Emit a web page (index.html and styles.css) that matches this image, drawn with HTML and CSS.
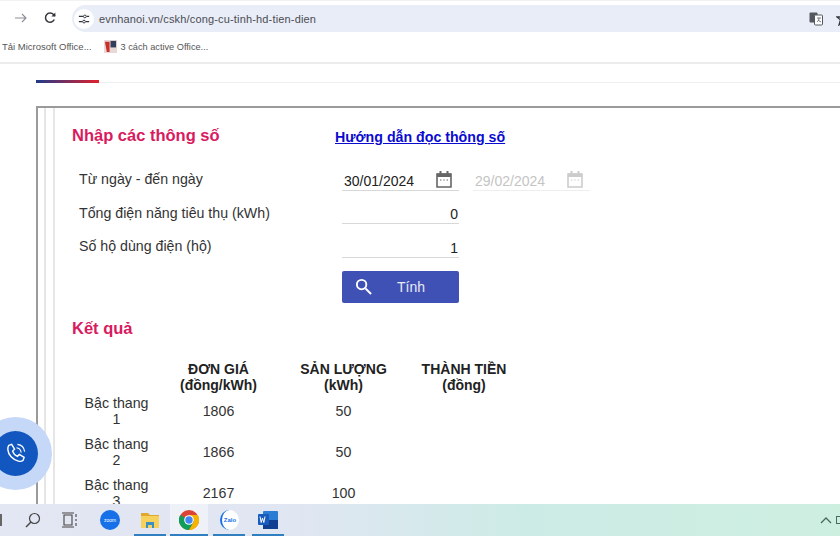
FILE: index.html
```html
<!DOCTYPE html>
<html lang="vi">
<head>
<meta charset="utf-8">
<title>Công cụ tính hóa đơn tiền điện</title>
<link rel="stylesheet" href="styles.css">
</head>
<body>
<div class="screen">
  <header class="toolbar">
    <svg class="nav-icon forward" viewBox="0 0 14 14"><path d="M1 7h11M8 3l4 4-4 4" fill="none" stroke="#8a8d94" stroke-width="1.1"/></svg>
    <svg class="nav-icon reload" viewBox="0 0 14 14"><path d="M11.3 8.5A4.6 4.6 0 1 1 10.5 3.6L12 5" fill="none" stroke="#33363b" stroke-width="1.5"/><path d="M12.4 1.6v4h-4z" fill="#33363b"/></svg>
    <div class="omnibox">
      <span class="site-chip">
        <svg viewBox="0 0 14 14" class="chip-icon"><path d="M1 4h5M9 10h4M1 10h4M10 4h3" stroke="#33363b" stroke-width="1.3" fill="none"/><circle cx="8" cy="4" r="1.6" fill="none" stroke="#33363b" stroke-width="1.1"/><circle cx="7" cy="10" r="1.6" fill="none" stroke="#33363b" stroke-width="1.1"/></svg>
      </span>
      <span class="url">evnhanoi.vn/cskh/cong-cu-tinh-hd-tien-dien</span>
      <svg class="translate" viewBox="0 0 14 14"><rect x="0.5" y="0.5" width="8" height="10" rx="1" fill="#55585e"/><rect x="5.5" y="3" width="8" height="10" rx="1" fill="#fff" stroke="#55585e"/><path d="M8 6h4M10 6c0 2-1 3-2 4M9 8l3 2" stroke="#55585e" fill="none" stroke-width=".8"/></svg>
      <svg class="star" viewBox="0 0 14 14"><path d="M7 1l1.8 4H13l-3.4 2.8L11 13 7 10.2 3 13l1.4-5.2L1 5h4.2z" fill="none" stroke="#33363b" stroke-width="1.3"/></svg>
    </div>
  </header>

  <nav class="bookmarks">
    <span class="bookmark">Tải Microsoft Office...</span>
    <span class="bookmark">
      <svg class="fav" viewBox="0 0 14 14"><rect width="14" height="14" fill="#e9d9d6"/><path d="M1 2h5v11H3z" fill="#c9302c"/><rect x="7" y="1" width="6" height="7" fill="#33405c"/></svg>
      <span class="bookmark-text">3 cách active Office...</span>
    </span>
  </nav>

  <main class="page">
    <div class="heading-tail">
      <div class="underline"></div>
    </div>

    <section class="panel">
      <div class="frame">
        <div class="inner">
          <div class="title-row">
            <h2 class="section-title">Nhập các thông số</h2>
            <a class="guide" href="#">Hướng dẫn đọc thông số</a>
          </div>

          <div class="form">
            <div class="form-labels">
              <div class="label">Từ ngày - đến ngày</div>
              <div class="label">Tổng điện năng tiêu thụ (kWh)</div>
              <div class="label">Số hộ dùng điện (hộ)</div>
            </div>
            <div class="form-fields">
              <div class="date-row">
                <div class="field date">
                  <span>30/01/2024</span>
                  <svg class="cal" viewBox="0 0 16 17"><path d="M1 3h14v13H1z" fill="none" stroke="#666" stroke-width="1.6"/><path d="M1 2.5h14V6H1zM3.5 0h2v3h-2zM10.5 0h2v3h-2z" fill="#666"/><path d="M4 9h1.4M7.3 9h1.4M10.6 9H12" stroke="#666"/></svg>
                </div>
                <div class="field date disabled">
                  <span>29/02/2024</span>
                  <svg class="cal" viewBox="0 0 16 17"><path d="M1 3h14v13H1z" fill="none" stroke="#ccc" stroke-width="1.6"/><path d="M1 2.5h14V6H1zM3.5 0h2v3h-2zM10.5 0h2v3h-2z" fill="#ccc"/><path d="M4 9h1.4M7.3 9h1.4M10.6 9H12" stroke="#ccc"/></svg>
                </div>
              </div>
              <div class="field number">0</div>
              <div class="field number">1</div>
              <button class="calc" type="button">
                <svg class="search" viewBox="0 0 18 18"><circle cx="7" cy="7" r="5" fill="none" stroke="#fff" stroke-width="2"/><path d="M11 11l6 6" stroke="#fff" stroke-width="2.2"/></svg>
                <span>Tính</span>
              </button>
            </div>
          </div>

          <h2 class="section-title result">Kết quả</h2>

          <table class="prices">
            <thead>
              <tr><th class="c-name"></th><th class="c-price">ĐƠN GIÁ<br>(đồng/kWh)</th><th class="c-qty">SẢN LƯỢNG<br>(kWh)</th><th class="c-total">THÀNH TIỀN<br>(đồng)</th></tr>
            </thead>
            <tbody>
              <tr><td>Bậc thang<br>1</td><td>1806</td><td>50</td><td></td></tr>
              <tr><td>Bậc thang<br>2</td><td>1866</td><td>50</td><td></td></tr>
              <tr><td>Bậc thang<br>3</td><td>2167</td><td>100</td><td></td></tr>
            </tbody>
          </table>
        </div>
      </div>
    </section>

    <div class="call-ring"><div class="call-btn">
      <svg viewBox="0 0 24 24" class="call-icon"><path d="M5 3.5l3-1 3 5-2 2c.8 2.5 2.5 4.400 5 5.500l2-2 5 3-1 3c-1 1-3 1.500-5 1-6-1.500-10.500-6.500-11-12-.1-1.800.2-3.500 1-4.500z" fill="none" stroke="#fff" stroke-width="1.500"/><path d="M13 6c2.500.3 4.500 2.300 5 5M14 2.500c4 .5 7 3.500 7.500 7.500" fill="none" stroke="#fff" stroke-width="1.200"/></svg>
    </div></div>
  </main>

  <footer class="taskbar">
    <span class="tb-start"></span>
    <svg class="tb-search" viewBox="0 0 16 16"><circle cx="9.500" cy="6.500" r="5" fill="none" stroke="#444" stroke-width="1.200"/><path d="M6 10l-5 5" stroke="#444" stroke-width="1.400"/></svg>
    <svg class="tb-view" viewBox="0 0 16 16"><path d="M3 3h8v10H3zM1 1h12M1 15h12M15 2v3M15 7v2M15 11v3" fill="none" stroke="#444" stroke-width="1.100"/></svg>
    <span class="tb-app zoom"><span class="zoom-logo">zoom</span></span>
    <span class="tb-app active-line files">
      <svg viewBox="0 0 18 16" class="tb-logo"><path d="M0 1h7l2 2h9v3H0z" fill="#e0a82e"/><rect y="4" width="18" height="12" fill="#f6d15c"/><path d="M5 16v-6h8v6h-2v-3H7v3z" fill="#3a8fc4"/></svg>
    </span>
    <span class="tb-app active-line current">
      <svg viewBox="0 0 20 20" class="tb-logo chrome"><circle cx="10" cy="10" r="10" fill="#db4437"/><path d="M10 10L1.300 5A10 10 0 0 0 10 20l5-8.700z" fill="#0f9d58"/><path d="M10 10l5 1.300L10 20A10 10 0 0 0 18.700 5H10z" fill="#f4b400"/><circle cx="10" cy="10" r="4.800" fill="#fff"/><circle cx="10" cy="10" r="3.700" fill="#4285f4"/></svg>
    </span>
    <span class="tb-app active-line zalo"><span class="zalo-logo">Zalo</span></span>
    <span class="tb-app active-line word">
      <svg viewBox="0 0 20 18" class="tb-logo"><rect x="5" y="0" width="15" height="18" rx="1" fill="#2b7cd3"/><rect x="5" y="9" width="15" height="9" fill="#103f91"/><rect x="0" y="3" width="11" height="11" rx="1" fill="#185abd"/><path d="M2 5.500l1.200 6 1.300-4.500 1.300 4.500 1.200-6" stroke="#fff" fill="none"/></svg>
    </span>
    <span class="tb-spacer"></span>
    <svg class="tb-chevron" viewBox="0 0 12 8"><path d="M1 7l5-5 5 5" fill="none" stroke="#4a6a60" stroke-width="1.300"/></svg>
    <span class="tb-tray"></span>
  </footer>
</div>
</body>
</html>
```

FILE: styles.css
```css
* { box-sizing: border-box; }
html, body { margin: 0; padding: 0; background: #fff; }
body { font-family: "Liberation Sans", Arial, sans-serif; color: #333; }
.screen { width: 840px; height: 560px; overflow: hidden; display: flex; flex-direction: column; position: relative; background: #fff; }

.toolbar { height: 33px; flex: none; padding-top: 4px; display: flex; align-items: flex-start; border-top: 1px solid #f2f2f2; }
.nav-icon { width: 14px; height: 14px; flex: none; margin-top: 6px; }
.forward { margin-left: 14px; }
.reload { margin-left: 15px; }
.omnibox { flex: 1; margin-left: 15px; height: 27px; background: #e9edf7; border-radius: 14px 0 0 14px; display: flex; align-items: center; position: relative; }
.site-chip { width: 20px; height: 20px; margin-left: 2px; background: #fff; border-radius: 50%; display: flex; align-items: center; justify-content: center; }
.chip-icon { width: 12px; height: 12px; }
.url { margin-left: 5px; font-size: 11px; color: #4a4c52; letter-spacing: .16px; flex: 1; }
.translate { width: 14px; height: 14px; margin-right: 13px; }
.star { width: 14px; height: 14px; margin-right: -10px; }

.bookmarks { height: 31px; flex: none; display: flex; align-items: center; font-size: 9.5px; color: #555; padding: 0 0 2px 2px; gap: 12px; border-bottom: 2px solid #ececec; }
.bookmark { display: flex; align-items: center; gap: 4px; }
.bookmark-text { font-size: 9.2px; }
.fav { width: 13px; height: 13px; }

.page { height: 440px; flex: none; overflow: hidden; position: relative; padding-left: 36px; }
.heading-tail { height: 19px; position: relative; border-bottom: 1px solid #efefef; }
.underline { position: absolute; left: 0; bottom: -1px; width: 63px; height: 3px; background: linear-gradient(90deg, #1f3a8a, #e0202c); }

.panel { margin-top: 23px; border-left: 2px solid #9a9a9a; border-top: 2px solid #9a9a9a; padding-left: 6px; height: 400px; }
.frame { border-left: 2px solid #e6e6e6; padding-left: 7px; height: 100%; }
.inner { border-left: 2px solid #e6e6e6; padding-left: 17px; height: 100%; padding-top: 17px; }

.title-row { display: flex; align-items: baseline; height: 24px; }
.section-title { margin: 0; font-size: 16.5px; font-weight: bold; color: #d81b60; line-height: 20px; }
.title-row .section-title { width: 263px; }
.guide { font-size: 14.2px; font-weight: bold; color: #0b0bd0; text-decoration: underline; position: relative; top: 1px; }

.form { display: flex; margin-top: 14px; }
.form-labels { width: 270px; padding-left: 7px; flex: none; }
.label { height: 33.5px; font-size: 14.2px; line-height: 33.5px; color: #333; }
.form-fields { width: 260px; margin-top: -4px; }
.date-row { display: flex; gap: 14px; }
.field { height: 33.3px; border-bottom: 1px solid #d8d8d8; font-size: 14px; color: #222; display: flex; align-items: flex-end; padding-bottom: 1px; width: 117px; }
.field.date { justify-content: space-between; padding-left: 2px; padding-right: 7px; align-items: center; padding-top: 12px; padding-bottom: 0; height: 32px; }
.field.number { justify-content: flex-end; padding-right: 1px; }
.field.disabled { color: #c4c4c4; border-bottom-color: #eee; }
.cal { width: 16px; height: 17px; margin-top: -3px; }

.calc { margin-top: 13px; width: 117px; height: 32px; border: 0; border-radius: 2px; background: #3f51b5; color: #e8eaf6; font: 14px "Liberation Sans", Arial, sans-serif; display: flex; align-items: center; padding: 0 0 0 13px; }
.calc span { margin-left: 25px; }
.search { width: 17px; height: 17px; }

.result { margin-top: 15px; }

.prices { border-collapse: collapse; margin-top: 23px; table-layout: fixed; width: 445px; margin-left: 7px; font-size: 14.2px; color: #333; }
.prices th { font-size: 14px; line-height: 16px; font-weight: bold; color: #222; padding: 0 0 2px; vertical-align: bottom; text-align: center; }
.prices td { text-align: center; padding: 0 0 9px; line-height: 16px; vertical-align: middle; height: 41px; }
.c-name { width: 75px; }
.c-price { width: 129px; }
.c-qty { width: 121px; }
.c-total { width: 120px; }

.call-ring { position: absolute; left: -21px; top: 353px; width: 73px; height: 73px; border-radius: 50%; background: #c5d8f7; display: flex; align-items: center; justify-content: center; }
.call-btn { width: 45px; height: 45px; border-radius: 50%; background: #1257c0; display: flex; align-items: center; justify-content: center; }
.call-icon { width: 23px; height: 23px; margin-left: -1px; }

.taskbar { height: 32px; flex: none; display: flex; align-items: center; background: linear-gradient(90deg, #e3e6f3 0%, #e0e6f2 35%, #cdebe6 62%, #cdefe0 100%); position: relative; }
.tb-start { width: 2px; height: 12px; background: #666; }
.tb-search { width: 16px; height: 16px; margin-left: 23px; }
.tb-view { width: 16px; height: 16px; margin-left: 20px; }
.tb-app { height: 32px; display: flex; align-items: center; justify-content: center; flex: none; position: relative; }
.active-line::after { content: ""; position: absolute; left: 0; right: 0; bottom: 0; height: 2px; background: #2f7fc1; }
.zoom { width: 20px; margin-left: 23px; }
.zoom-logo { width: 20px; height: 20px; border-radius: 50%; background: #1670e8; color: #fff; font-size: 5px; line-height: 20px; text-align: center; display: block; }
.files { width: 32px; margin-left: 14px; }
.current { width: 38px; margin-left: 4px; background: #eef2f8; }
.zalo { width: 32px; margin-left: 5px; }
.zalo-logo { width: 19px; height: 20px; border-radius: 50%; background: #fff; border-left: 2px solid #1670e8; color: #1670e8; font-size: 6px; font-weight: bold; line-height: 20px; text-align: center; display: block; }
.word { width: 32px; margin-left: 7px; }
.tb-logo { width: 18px; height: 16px; }
.chrome { width: 20px; height: 20px; }
.word .tb-logo { width: 20px; height: 18px; }
.tb-spacer { flex: 1; }
.tb-chevron { width: 12px; height: 8px; margin-right: 4px; }
.tb-tray { width: 4px; height: 8px; border: 1px solid #4a6a60; border-right: 0; }
```
